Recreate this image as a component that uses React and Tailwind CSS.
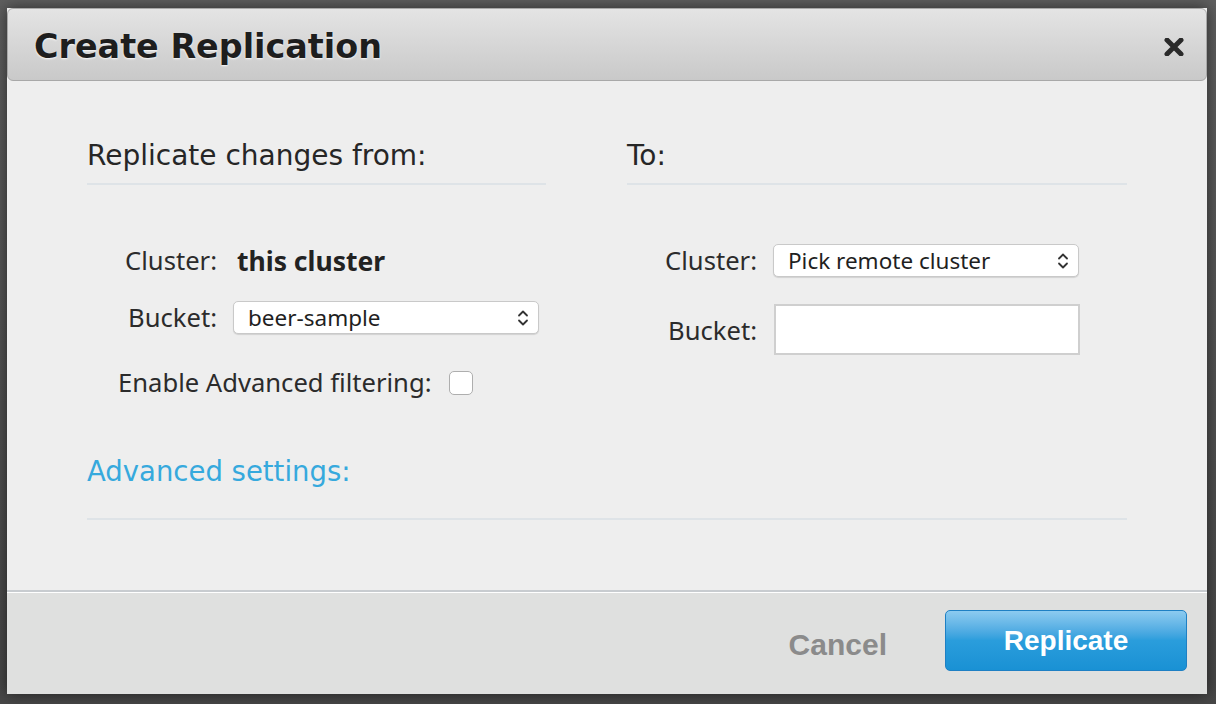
import React from 'react';

const label = "font-['Noto_Sans',sans-serif] text-[25.6px] leading-[32px] text-[#2b2b2b]";

function UpDown() {
  return (
    <svg width="12" height="18" viewBox="0 0 12 18" fill="none" stroke="#333" strokeWidth="1.8" strokeLinecap="round" strokeLinejoin="round">
      <path d="M2 6.5 L6 2.5 L10 6.5" />
      <path d="M2 11.5 L6 15.5 L10 11.5" />
    </svg>
  );
}

function Select({ value }) {
  return (
    <div className="w-[306px] h-[33px] flex items-center justify-between pl-[14px] pr-[9px] bg-white rounded-[5px] border border-[#c9c9c9] shadow-[0_1px_1px_rgba(0,0,0,0.12)]">
      <span className="font-['Noto_Sans',sans-serif] text-[22.5px] leading-[28px] text-[#1f1f1f]">{value}</span>
      <UpDown />
    </div>
  );
}

export default function App() {
  return (
    <div className="w-[1216px] h-[704px] overflow-hidden bg-gradient-to-b from-[#5f5f5f] to-[#474747] pt-[8px] pl-[7px]">
      <div className="w-[1200px] h-[686px] flex flex-col bg-[#eeeeee] shadow-[0_0_14px_rgba(0,0,0,0.55)]">
        {/* header */}
        <div className="h-[73px] shrink-0 flex items-center justify-between pl-[26px] pr-[22px] pt-[5px] rounded-[6px] border border-[#a8a8a8] bg-gradient-to-b from-[#e4e4e4] to-[#c9c9c9]">
          <h1 className="font-['DejaVu_Sans',sans-serif] font-bold text-[33.4px] text-[#1e1e1e] [text-shadow:0_1px_2px_rgba(255,255,255,0.9)]">
            Create Replication
          </h1>
          <svg width="20" height="18" viewBox="0 0 20 18">
            <path d="M3 2 L17 16 M17 2 L3 16" stroke="#2a2a2a" strokeWidth="5" strokeLinecap="round" />
          </svg>
        </div>

        {/* body */}
        <div className="flex-1 pl-[80px] pt-[58px]">
          <div className="flex w-[1040px] gap-[81px]">
            {/* from */}
            <div className="w-[459px]">
              <h2 className="font-['DejaVu_Sans',sans-serif] text-[28px] leading-[34px] text-[#262626] pb-[10px] border-b-2 border-[#dee3e7]">
                Replicate changes from:
              </h2>
              <div className="mt-[59px] h-[34px] flex items-center">
                <span className={`${label} w-[130px] text-right`}>Cluster:</span>
                <span className="ml-[20px] font-['Noto_Sans',sans-serif] font-bold text-[26.5px] leading-[32px] text-[#222]">this cluster</span>
              </div>
              <div className="mt-[23px] flex items-center">
                <span className={`${label} w-[130px] text-right`}>Bucket:</span>
                <div className="ml-[16px]">
                  <Select value="beer-sample" />
                </div>
              </div>
              <div className="mt-[33px] pl-[31px] flex items-center gap-[17px]">
                <span className={label}>Enable Advanced filtering:</span>
                <div className="w-[24px] h-[24px] rounded-[5px] border border-[#aeaeae] bg-white" />
              </div>
            </div>

            {/* to */}
            <div className="w-[500px]">
              <h2 className="font-['DejaVu_Sans',sans-serif] text-[28px] leading-[34px] text-[#262626] pb-[10px] border-b-2 border-[#dee3e7]">
                To:
              </h2>
              <div className="mt-[59px] flex items-center">
                <span className={`${label} w-[130px] text-right`}>Cluster:</span>
                <div className="ml-[16px]">
                  <Select value="Pick remote cluster" />
                </div>
              </div>
              <div className="mt-[27px] flex items-center">
                <span className={`${label} w-[130px] text-right pt-[2px]`}>Bucket:</span>
                <input className="ml-[17px] w-[306px] h-[51px] bg-white border-2 border-[#cfcfcf] outline-none" />
              </div>
            </div>
          </div>

          <div className="w-[1040px] mt-[55px] pb-[30px] border-b-2 border-[#dee3e7]">
            <span className="font-['DejaVu_Sans',sans-serif] text-[27.5px] leading-[34px] text-[#36a9dd]">
              Advanced settings:
            </span>
          </div>
        </div>

        {/* footer */}
        <div className="h-[104px] shrink-0 border-t-2 border-[#c8ccd0] bg-[#dfe0df] shadow-[inset_0_1px_0_#ffffff] flex items-start justify-end pr-[20px] pt-[18px]">
          <button className="font-['Liberation_Sans',sans-serif] font-bold text-[30px] leading-[36px] text-[#8b8b8b] mr-[58px] mt-[17px]">
            Cancel
          </button>
          <button className="w-[242px] h-[61px] rounded-[5px] border border-[#1e80c4] bg-gradient-to-b from-[#8ccbf0] via-[#2a9ddc] to-[#1991d4] font-['Liberation_Sans',sans-serif] font-bold text-[28px] text-white">
            Replicate
          </button>
        </div>
      </div>
    </div>
  );
}
